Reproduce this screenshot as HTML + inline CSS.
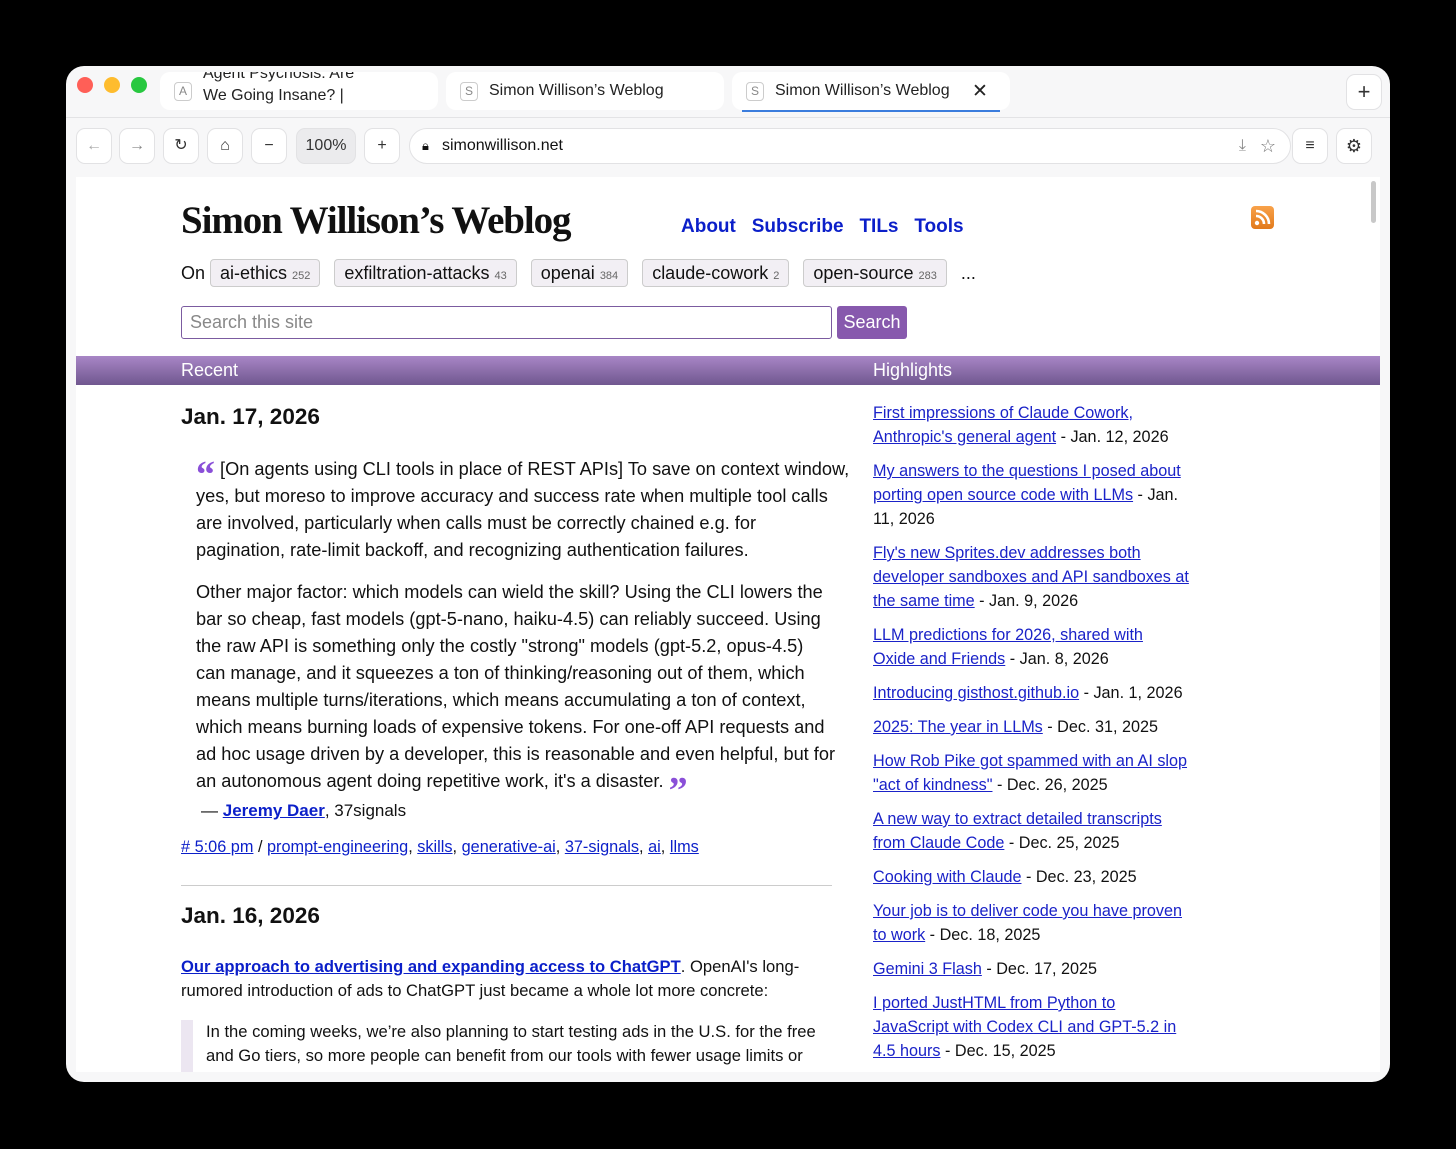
<!DOCTYPE html>
<html><head><meta charset="utf-8"><style>
*{margin:0;padding:0;box-sizing:border-box}
body{width:1456px;height:1149px;background:#000;position:relative;overflow:hidden;font-family:"Liberation Sans",sans-serif;color:#111}
.win{position:absolute;left:66px;top:66px;width:1324px;height:1016px;background:#f7f7f8;border-radius:18px;overflow:hidden}
.dot{position:absolute;top:11px;width:16px;height:16px;border-radius:50%}
.tab{position:absolute;top:6px;height:38px;background:#fff;border-radius:10px;font-size:16px;color:#222}
.fav{position:absolute;left:14px;top:10px;width:18px;height:19px;border:1px solid #ccc;border-radius:4px;font-size:12px;color:#888;text-align:center;line-height:17px}
.btn{position:absolute;top:62px;width:36px;height:36px;background:#fff;border:1px solid #e2e2e4;border-radius:9px;text-align:center;line-height:34px;font-size:16px;color:#333}
.page{position:absolute;left:10px;top:111px;width:1304px;height:895px;background:#fff;overflow:hidden}
a{color:#0b1fc9;text-decoration:underline}
.abs{position:absolute;white-space:nowrap}
.tag{display:inline-block;height:28px;padding:0 9px;border:1px solid #ccc;border-radius:4px;background:#f2eff4;font-size:18px;line-height:26px;margin-right:9px}
.tag small{font-size:11px;color:#666}
.q{font-size:18.2px;line-height:27px}
.side{position:absolute;left:797px;top:224px;font-size:16.2px;line-height:24px;white-space:nowrap}
.side div{margin-bottom:10px}
.side a{color:#1a22c8}
</style></head><body>
<div class="win">
 <div class="dot" style="left:11px;background:#ff5f57"></div>
 <div class="dot" style="left:38px;background:#febc2e"></div>
 <div class="dot" style="left:65px;background:#28c840"></div>
 <div class="tab" style="left:94px;width:278px;overflow:hidden"><div class="fav">A</div><div style="position:absolute;left:43px;top:-9px;line-height:22px;font-size:16px">Agent Psychosis: Are<br>We Going Insane? |<br>Lobsters</div></div>
 <div class="tab" style="left:380px;width:278px"><div class="fav">S</div><div style="position:absolute;left:43px;top:10px">Simon Willison’s Weblog</div></div>
 <div class="tab" style="left:666px;width:278px"><div class="fav">S</div><div style="position:absolute;left:43px;top:10px">Simon Willison’s Weblog</div><div style="position:absolute;left:240px;top:8px;font-size:19px">✕</div><div style="position:absolute;left:10px;right:10px;bottom:-2px;height:2px;background:#3b7ddd"></div></div>
 <div class="btn" style="left:1280px;top:8px;font-size:22px">+</div>
 <div style="position:absolute;left:0;right:0;top:51px;height:1px;background:#e3e3e5"></div>
 <div class="btn" style="left:10px;color:#aaa">←</div>
 <div class="btn" style="left:53px;color:#888">→</div>
 <div class="btn" style="left:97px">↻</div>
 <div class="btn" style="left:141px">⌂</div>
 <div class="btn" style="left:185px">−</div>
 <div class="btn" style="left:230px;width:60px;background:#ebebed">100%</div>
 <div class="btn" style="left:298px">+</div>
 <div style="position:absolute;left:343px;top:62px;width:882px;height:36px;background:#fff;border:1px solid #e2e2e4;border-radius:18px;font-size:16px;line-height:34px;padding-left:32px">simonwillison.net<span style="position:absolute;left:12px;top:0;font-size:13px">🔒︎</span><span style="position:absolute;right:44px;color:#888">⤓</span><span style="position:absolute;right:14px;color:#777;font-size:18px">☆</span></div>
 <div class="btn" style="left:1226px">≡</div>
 <div class="btn" style="left:1270px;font-size:18px">⚙</div>
 <div class="page">
  <div class="abs" style="left:105px;top:21px;font-family:'Liberation Serif',serif;font-weight:bold;font-size:39px;letter-spacing:-1.1px">Simon Willison’s Weblog</div>
  <div class="abs" style="left:605px;top:39px;font-size:19px;font-weight:bold"><a style="text-decoration:none">About</a>&nbsp;&nbsp;&nbsp;<a style="text-decoration:none">Subscribe</a>&nbsp;&nbsp;&nbsp;<a style="text-decoration:none">TILs</a>&nbsp;&nbsp;&nbsp;<a style="text-decoration:none">Tools</a></div>
  <div class="abs" style="left:1175px;top:29px;width:23px;height:23px;border-radius:4px;background:linear-gradient(#f9a24a,#e27a1c)"><svg width="23" height="23"><circle cx="6" cy="17" r="2.2" fill="#fff"/><path d="M5 10a8 8 0 0 1 8 8M5 5a13 13 0 0 1 13 13" stroke="#fff" stroke-width="2.6" fill="none"/></svg></div>
  <div class="abs" style="left:105px;top:82px;font-size:18px;line-height:28px">On <span class="tag">ai-ethics <small>252</small></span> <span class="tag">exfiltration-attacks <small>43</small></span> <span class="tag">openai <small>384</small></span> <span class="tag">claude-cowork <small>2</small></span> <span class="tag">open-source <small>283</small></span> ...</div>
  <div class="abs" style="left:105px;top:129px;width:651px;height:33px;border:1px solid #7b5ba0;border-radius:3px;font-size:18px;color:#888;line-height:31px;padding-left:8px">Search this site</div>
  <div class="abs" style="left:761px;top:129px;width:70px;height:33px;background:#8759ad;border-radius:3px;color:#fff;font-size:18px;line-height:33px;text-align:center">Search</div>
  <div class="abs" style="left:0;top:179px;width:1304px;height:29px;background:linear-gradient(#a886c6,#70578f);color:#fff;font-size:18px;line-height:29px"><span style="position:absolute;left:105px">Recent</span><span style="position:absolute;left:797px">Highlights</span></div>
  <div class="abs" style="left:105px;top:227px;font-size:22.5px;font-weight:bold">Jan. 17, 2026</div>
  <div class="abs q" style="left:120px;top:279px"><span style="color:#8a4fd8;font-family:'Liberation Serif',serif;font-size:38px;font-weight:bold;vertical-align:-12px;line-height:10px">“</span> [On agents using CLI tools in place of REST APIs] To save on context window,<br>yes, but moreso to improve accuracy and success rate when multiple tool calls<br>are involved, particularly when calls must be correctly chained e.g. for<br>pagination, rate-limit backoff, and recognizing authentication failures.</div>
  <div class="abs q" style="left:120px;top:402px">Other major factor: which models can wield the skill? Using the CLI lowers the<br>bar so cheap, fast models (gpt-5-nano, haiku-4.5) can reliably succeed. Using<br>the raw API is something only the costly "strong" models (gpt-5.2, opus-4.5)<br>can manage, and it squeezes a ton of thinking/reasoning out of them, which<br>means multiple turns/iterations, which means accumulating a ton of context,<br>which means burning loads of expensive tokens. For one-off API requests and<br>ad hoc usage driven by a developer, this is reasonable and even helpful, but for<br>an autonomous agent doing repetitive work, it's a disaster. <span style="color:#8a4fd8;font-family:'Liberation Serif',serif;font-size:38px;font-weight:bold;vertical-align:-16px;line-height:10px">”</span></div>
  <div class="abs" style="left:125px;top:624px;font-size:17px">— <a style="font-weight:bold">Jeremy Daer</a>, 37signals</div>
  <div class="abs" style="left:105px;top:661px;font-size:16.3px"><a># 5:06 pm</a> / <a>prompt-engineering</a>, <a>skills</a>, <a>generative-ai</a>, <a>37-signals</a>, <a>ai</a>, <a>llms</a></div>
  <div class="abs" style="left:105px;top:708px;width:651px;height:1px;background:#ccc"></div>
  <div class="abs" style="left:105px;top:726px;font-size:22.5px;font-weight:bold">Jan. 16, 2026</div>
  <div class="abs" style="left:105px;top:778px;font-size:16.6px;line-height:24px"><a style="font-weight:bold">Our approach to advertising and expanding access to ChatGPT</a>. OpenAI's long-<br>rumored introduction of ads to ChatGPT just became a whole lot more concrete:</div>
  <div class="abs" style="left:105px;top:843px;width:12px;height:60px;background:#ece6f1"></div>
  <div class="abs" style="left:130px;top:843px;font-size:16.6px;line-height:24px">In the coming weeks, we’re also planning to start testing ads in the U.S. for the free<br>and Go tiers, so more people can benefit from our tools with fewer usage limits or</div>
  <div class="side">
   <div><a>First impressions of Claude Cowork,</a><br><a>Anthropic's general agent</a> - Jan. 12, 2026</div>
   <div><a>My answers to the questions I posed about</a><br><a>porting open source code with LLMs</a> - Jan.<br>11, 2026</div>
   <div><a>Fly's new Sprites.dev addresses both</a><br><a>developer sandboxes and API sandboxes at</a><br><a>the same time</a> - Jan. 9, 2026</div>
   <div><a>LLM predictions for 2026, shared with</a><br><a>Oxide and Friends</a> - Jan. 8, 2026</div>
   <div><a>Introducing gisthost.github.io</a> - Jan. 1, 2026</div>
   <div><a>2025: The year in LLMs</a> - Dec. 31, 2025</div>
   <div><a>How Rob Pike got spammed with an AI slop</a><br><a>"act of kindness"</a> - Dec. 26, 2025</div>
   <div><a>A new way to extract detailed transcripts</a><br><a>from Claude Code</a> - Dec. 25, 2025</div>
   <div><a>Cooking with Claude</a> - Dec. 23, 2025</div>
   <div><a>Your job is to deliver code you have proven</a><br><a>to work</a> - Dec. 18, 2025</div>
   <div><a>Gemini 3 Flash</a> - Dec. 17, 2025</div>
   <div><a>I ported JustHTML from Python to</a><br><a>JavaScript with Codex CLI and GPT-5.2 in</a><br><a>4.5 hours</a> - Dec. 15, 2025</div>
  </div>
  <div class="abs" style="left:1295px;top:4px;width:5px;height:42px;background:#c8c8c8;border-radius:3px"></div>
 </div>
</div>
</body></html>
